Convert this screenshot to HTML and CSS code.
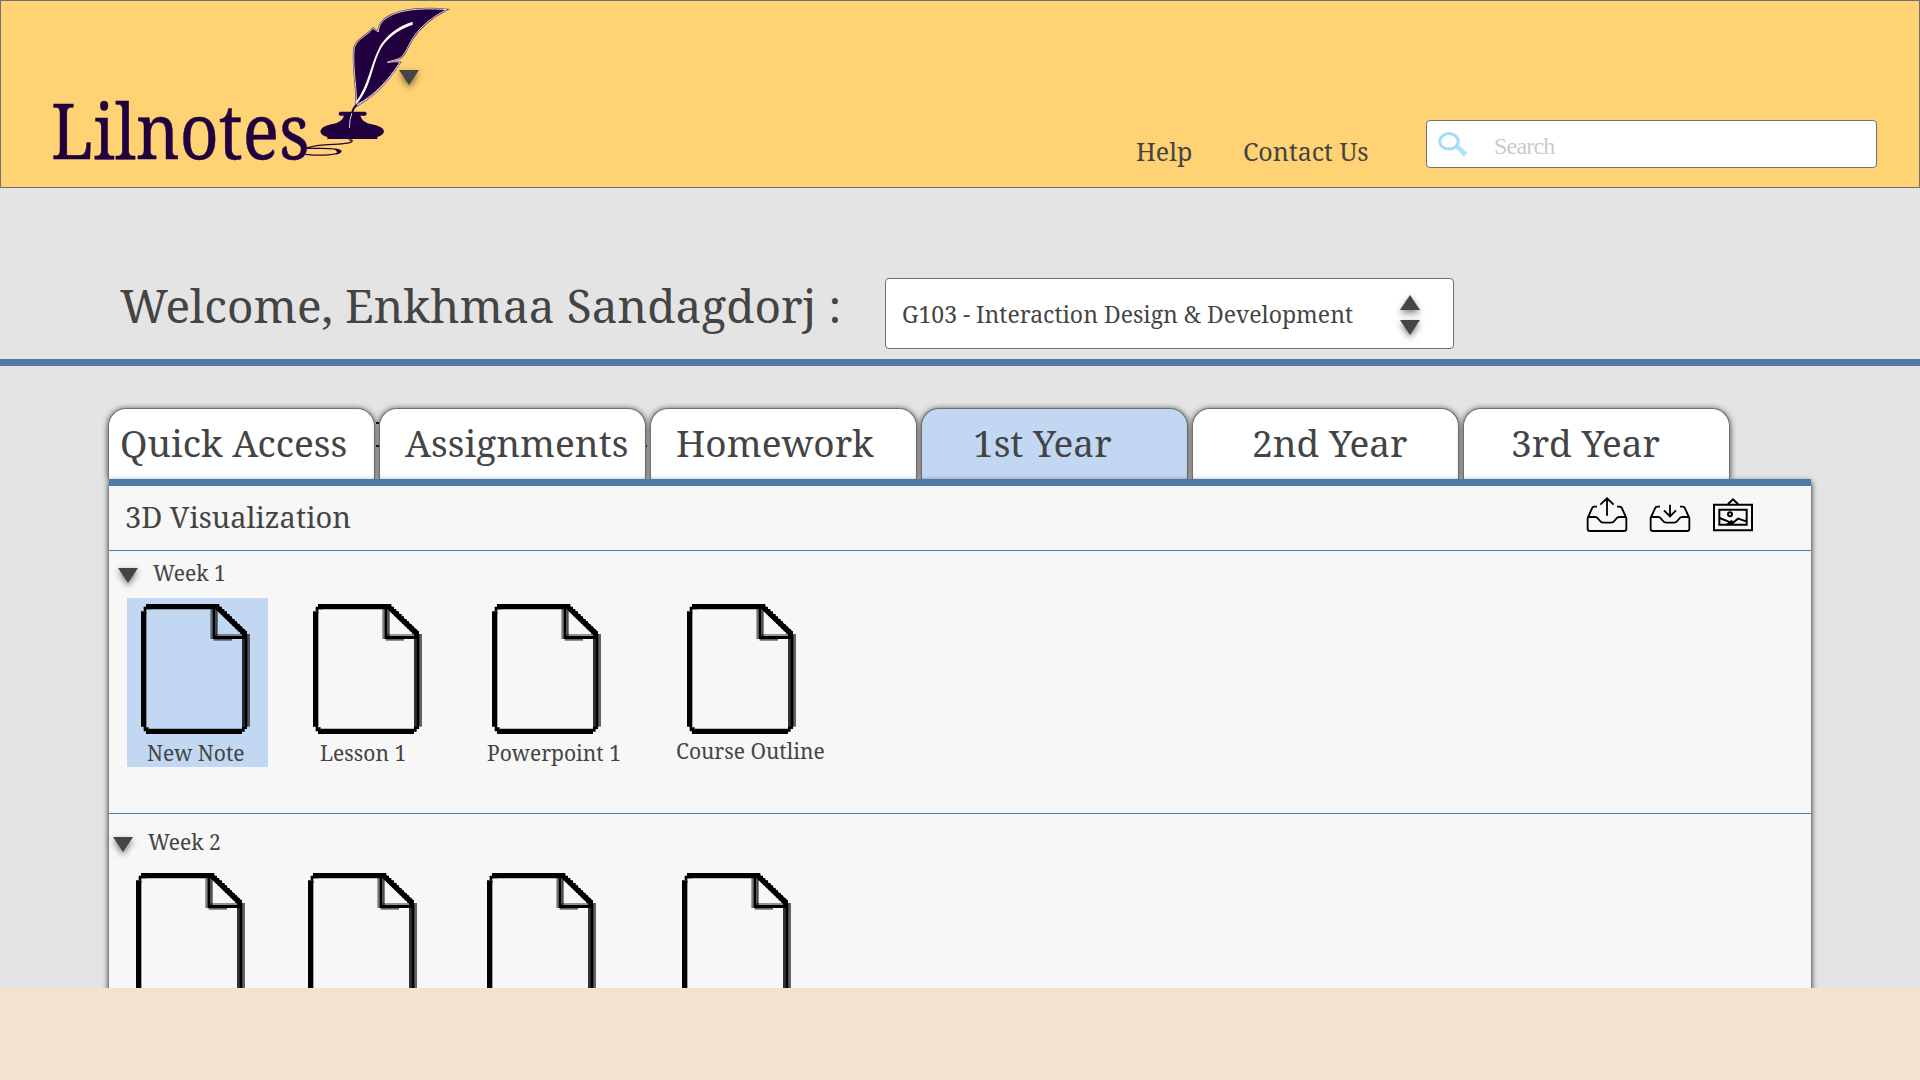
FILE: index.html
```html
<!DOCTYPE html>
<html lang="en">
<head>
<meta charset="utf-8">
<title>Lilnotes</title>
<link rel="stylesheet" href="styles.css">
</head>
<body>
<svg class="defs" width="0" height="0">
  <symbol id="doc" viewBox="0 0 330 390">
    <path d="M0 22H16V368H0ZM15 0H232V16H15ZM23 374H303V390H23Z"/>
    <path d="M8 8H23V15H30V16H16V30H15V22H8ZM8 362H15V370H23V378H30V390H15V382H8ZM295 375H303V367H318V375H311V383H303V390H295Z"/>
    <path d="M303 90H311V368H303Z" opacity=".8"/>
    <path d="M310 90H319V368H310Z"/>
    <path d="M318 90H327V368H318Z" opacity=".6"/>
    <path d="M208 15H216V105H208Z" opacity=".5"/>
    <path d="M215 15H223V105H215Z"/>
    <path d="M223 15H230V97H223Z" opacity=".7"/>
    <path d="M216 96H318V105H216Z"/>
    <path d="M223 90H311V97H223Z" opacity=".4"/>
    <path d="M218 105H273V110H218Z" opacity=".6"/>
    <path d="M230 2L318 83V97H308L225 17Z"/>
    <path d="M225 0H235V8H243V15H250V22H258V30H266V37H273V45H281V52H288V60H296V67H303V75H311V82H318V97H305V90H298V82H290V75H283V67H275V60H268V52H260V45H253V37H245V30H238V22H230V15H225Z"/>
  </symbol>
  <symbol id="tri" viewBox="0 0 20 15"><path d="M0 0H20L10 15Z"/></symbol>
</svg>
<div class="page">
  <header class="header">
    <div class="brand">
      <span class="brand-name">Lilnotes</span>
      <svg class="quill" viewBox="0 0 450 480">
        <path class="ink" d="M120 335H196Q204 341 196 347H181Q187 368 215 373Q251 380 252 394Q250 407 232 411V417H82V411Q62 406 61 394Q63 379 94 373Q126 368 132 347H120Q112 341 120 335Z"/>
        <path class="swirl" d="M147 420C158 418 160 424 150 428C120 436 60 430 20 444C40 448 110 440 122 453C120 466 60 468 16 463"/>
        <path class="ink" d="M100 446Q124 448 125 454Q122 462 106 464Q118 455 100 446Z"/>
        <path class="edge" d="M168 318C173 270 158 220 162 150C163 128 185 115 198 104C208 98 213 92 219 85L235 96C236 62 268 45 300 36C345 25 400 25 440 29C395 52 362 78 338 115C320 145 314 168 296 176L262 187C280 185 290 184 300 187C270 235 230 285 168 318Z"/>
        <path class="feather" d="M168 318C173 270 158 220 162 150C163 128 185 115 198 104C208 98 213 92 219 85L235 96C236 62 268 45 300 36C345 25 400 25 440 29C395 52 362 78 338 115C320 145 314 168 296 176L262 187C280 185 290 184 300 187C270 235 230 285 168 318Z"/>
        <path class="rib" d="M338 65V74C290 90 258 120 245 142C215 195 215 260 171 311L167 307C206 255 210 195 239 140C254 113 290 78 338 65Z"/>
        <path class="nib" d="M298 190C265 240 225 285 172 313M157 335Q148 358 148 384"/>
        <path class="nib-dark" d="M170 314Q160 322 156 340"/>
      </svg>
      <svg class="tri brand-arrow"><use href="#tri"/></svg>
    </div>
    <nav class="nav">
      <a class="help"><span>Help</span></a>
      <a class="contact"><span>Contact Us</span></a>
    </nav>
    <div class="search">
      <svg class="lens" viewBox="0 0 30 26"><path d="M17.5 16L21 13L29.5 21L26 25Z" fill="#b4e3f6"/><ellipse cx="11" cy="9.3" rx="9.2" ry="7.8"/></svg>
      <span class="placeholder">Search</span>
    </div>
  </header>
  <section class="welcome">
    <h1><span>Welcome, Enkhmaa Sandagdorj :</span></h1>
    <div class="select">
      <span class="select-text">G103 - Interaction Design &amp; Development</span>
      <span class="spinner"><svg class="tri up"><use href="#tri"/></svg><svg class="tri"><use href="#tri"/></svg></span>
    </div>
  </section>
  <main class="main">
    <div class="tabs">
      <div class="tab t1"><span>Quick Access</span></div>
      <div class="tab t2"><span>Assignments</span></div>
      <div class="tab t3"><span>Homework</span></div>
      <div class="tab t4 active"><span>1st Year</span></div>
      <div class="tab t5"><span>2nd Year</span></div>
      <div class="tab t6"><span>3rd Year</span></div>
      <i class="dot d1"></i><i class="dot d2"></i><i class="dot d3"></i>
    </div>
    <div class="panel">
      <div class="panel-head">
        <h2><span>3D Visualization</span></h2>
        <svg class="tool" viewBox="0 0 120 108"><path d="M2 60L16 29Q17 26 22 26H30M90 26H98Q103 26 104 29L118 60V92Q118 99 111 99H9Q2 99 2 92V60Q2 57 6 57H25C36 57 36 74 49 74H72C85 74 85 57 96 57H116M60 53V2M40 20L60 1L80 20"/></svg>
        <svg class="tool" viewBox="0 0 120 108"><path d="M2 60L16 29Q17 26 22 26H30M90 26H98Q103 26 104 29L118 60V92Q118 99 111 99H9Q2 99 2 92V60Q2 57 6 57H25C36 57 36 74 49 74H72C85 74 85 57 96 57H116M60 20V54M42 37L60 55L78 37"/></svg>
        <svg class="tool frame" viewBox="0 0 120 108"><path d="M3 20H117V97H3ZM19 35H101V80H19ZM45 18L60 4L75 18M20 60L45 70L58 76L75 62L100 70M42 80L58 68"/><circle cx="51" cy="49" r="6"/></svg>
      </div>
      <section class="week">
        <div class="week-title"><svg class="tri"><use href="#tri"/></svg><span>Week 1</span></div>
        <div class="files">
          <div class="file selected"><svg class="doc"><use href="#doc"/></svg><span class="l1">New Note</span></div>
          <div class="file"><svg class="doc"><use href="#doc"/></svg><span class="l2">Lesson 1</span></div>
          <div class="file"><svg class="doc"><use href="#doc"/></svg><span class="l3">Powerpoint 1</span></div>
          <div class="file"><svg class="doc"><use href="#doc"/></svg><span class="l4">Course Outline</span></div>
        </div>
      </section>
      <section class="week second">
        <div class="week-title"><svg class="tri"><use href="#tri"/></svg><span>Week 2</span></div>
        <div class="files">
          <div class="file"><svg class="doc"><use href="#doc"/></svg></div>
          <div class="file"><svg class="doc"><use href="#doc"/></svg></div>
          <div class="file"><svg class="doc"><use href="#doc"/></svg></div>
          <div class="file"><svg class="doc"><use href="#doc"/></svg></div>
        </div>
      </section>
    </div>
  </main>
</div>
</body>
</html>
```
FILE: styles.css
```css
* { box-sizing: border-box; }
body { margin: 0; height: 1080px; overflow: hidden; background: #f4e2cf; color: #444;
  font-family: "Noto Serif", "Droid Serif", "DejaVu Serif Condensed", "DejaVu Serif", serif; }
svg { display: block; flex: none; }
.defs { position: absolute; }
span { white-space: nowrap; }
h1, h2 { margin: 0; font-weight: 400; }
.page { height: 988px; overflow: hidden; background: #e4e4e4; }
.tri { width: 20px; height: 15px; fill: #444; overflow: visible; filter: drop-shadow(0 3px 3px rgba(0,0,0,.5)); }

.header { height: 188px; background: #ffd273; border: 1px solid #707070; display: flex; }
.brand { width: 1135px; display: flex; padding-left: 50px; }
.brand-name { width: 255px; font-size: 76px; line-height: 90px; margin-top: 84px; color: #220040; transform: scaleX(.892); transform-origin: 0 0; -webkit-text-stroke: .5px #220040; }
.quill { width: 150px; height: 160px; margin: -1px 0 0 -6px; }
.brand-arrow { margin: 69px 0 0 -51px; }
.ink { fill: #220040; }
.swirl { fill: none; stroke: #220040; stroke-width: 4; }
.edge { fill: none; stroke: #4a2a55; stroke-width: 6; }
.feather { fill: #220040; stroke: #ddd0dc; stroke-width: 3; }
.rib { fill: #fff; }
.nib { fill: none; stroke: #d8cddc; stroke-width: 3; }
.nib-dark { fill: none; stroke: #220040; stroke-width: 6; }
.nav { width: 290px; display: flex; font-size: 25px; line-height: 30px; padding-top: 135px; }
.help { width: 107px; }
.search { width: 451px; height: 48px; margin-top: 119px; background: #fff; border: 1px solid #707070; border-radius: 4px; display: flex; }
.lens { width: 30px; height: 26px; margin: 11px 0 0 11px; fill: none; }
.lens ellipse { stroke: #a5dcf4; stroke-width: 3; }
.placeholder { margin: 10px 0 0 26px; font: 24px/30px "Liberation Serif", serif; letter-spacing: -.8px; color: #ccc; }

.welcome { height: 178px; border-bottom: 7px solid #5079a5; display: flex; padding: 90px 0 0 120px; }
h1 { width: 765px; font-size: 46px; line-height: 56px; margin-top: -1px; }
.select { width: 569px; height: 71px; background: #fff; border: 1px solid #707070; border-radius: 4px; display: flex; }
.select-text { width: 514px; padding: 20px 0 0 16px; font-size: 23px; line-height: 30px; }
.spinner { padding-top: 16px; display: flex; flex-direction: column; gap: 10px; }
.up { transform: scaleY(-1); filter: drop-shadow(0 -3px 3px rgba(0,0,0,.5)); }

.main { padding: 42px 0 0 108px; }
.tabs { position: relative; display: flex; gap: 4px; height: 71px; }
.tab { width: 267px; background: #fff; border: 1px solid #707070; border-bottom: 0; border-radius: 18px 18px 0 0; box-shadow: 0 1px 6px rgba(0,0,0,.75); font-size: 37px; line-height: 44px; padding-top: 12px; }
.active { background: #c2d7f2; }
.t1 { padding-left: 11px; } .t2 { padding-left: 25px; } .t3 { padding-left: 25px; }
.t4 { padding-left: 51px; } .t5 { padding-left: 59px; } .t6 { padding-left: 47px; }
.dot { position: absolute; width: 3px; height: 2px; background: #111; }
.d1 { left: 268px; top: 14px; } .d2 { left: 268px; top: 37px; } .d3 { left: 538px; top: 37px; width: 1px; }
.panel { position: relative; margin-left: 1px; width: 1702px; height: 540px; background: #f7f7f7; border-top: 7px solid #5079a5; box-shadow: 0 3px 6px rgba(0,0,0,.95); }
.panel-head { height: 65px; border-bottom: 1px solid #5079a5; display: flex; }
h2 { width: 1478px; padding: 13px 0 0 16px; font-size: 29px; line-height: 36px; }
.tool { width: 40px; height: 36px; margin: 12px 23px 0 0; fill: none; stroke: #000; stroke-width: 5.5; overflow: visible; }
.frame { margin-right: 0; stroke-width: 6; }
.week { height: 263px; border-bottom: 1px solid #5079a5; }
.week-title { height: 47px; display: flex; padding: 17px 0 0 9px; font-size: 21px; line-height: 26px; }
.week-title span { margin: -8px 0 0 15px; }
.files { display: grid; grid-template-columns: 172px 179px 195px 141px; padding-left: 18px; }
.file { width: 141px; height: 169px; padding: 6px 0 0 14px; font-size: 21px; line-height: 26px; }
.file span { display: block; margin-top: 6px; }
.selected { background: #c2d7f2; }
.doc { width: 110px; height: 130px; }
.l1 { margin-left: 6px; } .l2 { margin-left: 7px; } .l3 { margin-left: -5px; }
.file .l4 { margin: 4px 0 0 -11px; }
.second { border: 0; }
.second .week-title { height: 53px; padding: 23px 0 0 4px; }
.second .files { padding-left: 13px; }
```
